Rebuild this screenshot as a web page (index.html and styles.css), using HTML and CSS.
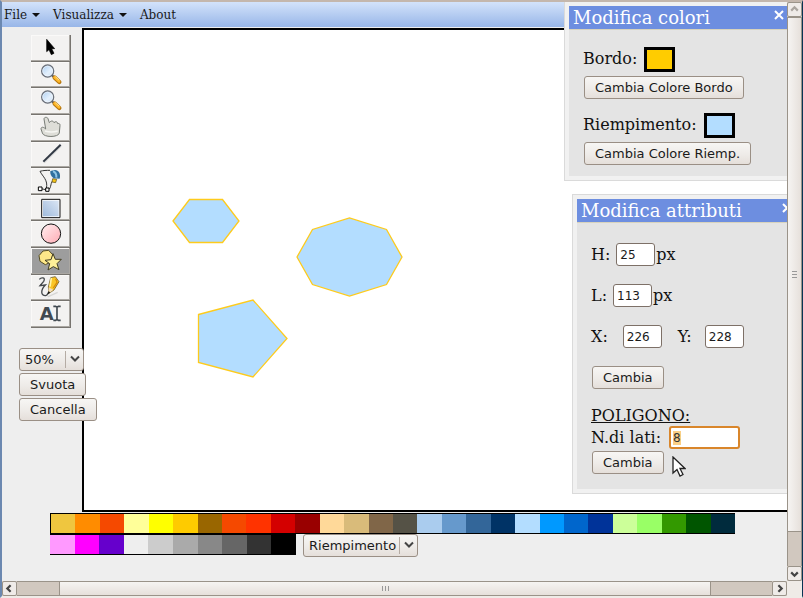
FILE: index.html
```html
<!DOCTYPE html>
<html lang="it">
<head>
<meta charset="utf-8">
<title>Editor SVG</title>
<link rel="stylesheet" href="styles.css">
</head>
<body>
<div class="window">
  <div class="page">
    <nav class="menubar">
      <button type="button">File <span class="caret"></span></button>
      <button type="button">Visualizza <span class="caret"></span></button>
      <button type="button">About</button>
    </nav>

    <div class="workspace">
      <div class="side">
        <div class="tools">
          <button type="button" aria-label="Seleziona"><svg viewBox="0 0 120 80"><path d="M47 13V50L54 44L61 59L69 55L62 41H71Z" fill="#000" stroke="#000" stroke-width="2"/></svg></button>
          <button type="button" aria-label="Zoom avanti"><svg viewBox="0 0 120 80"><defs><linearGradient id="lens" x1="0" y1="0" x2="1" y2="1"><stop offset="0" stop-color="#a9cdf2"/><stop offset=".6" stop-color="#e4f0fc"/><stop offset="1" stop-color="#c3dbf3"/></linearGradient><g id="magnifier"><path d="M63 40L74 50" stroke="#555" stroke-width="6"/><path d="M71 47L85 60" stroke="#b8780f" stroke-width="13" stroke-linecap="round"/><path d="M71 46L84 58" stroke="#ffb92c" stroke-width="8" stroke-linecap="round"/><path d="M73 44L84 54" stroke="#ffe08a" stroke-width="3"/><circle cx="50" cy="27" r="18" fill="url(#lens)" stroke="#686e78" stroke-width="4"/><circle cx="50" cy="27" r="15" fill="none" stroke="#f4f9ff" stroke-width="2"/></g></defs><use href="#magnifier"/></svg></button>
          <button type="button" aria-label="Zoom indietro"><svg viewBox="0 0 120 80"><use href="#magnifier"/></svg></button>
          <button type="button" aria-label="Sposta"><svg viewBox="0 0 120 80"><path d="M39 12C39 6 49 5 51 11L55 23C60 16 67 17 69 23C73 18 80 20 80 26C85 24 88 28 87 32L85 54C83 68 37 68 34 54L30 42C30 36 36 34 44 42Z" fill="#deded8" stroke="#777b75" stroke-width="3" stroke-linejoin="round"/><path d="M42 48Q60 54 80 48" fill="none" stroke="#f6f6f3" stroke-width="5"/></svg></button>
          <button type="button" aria-label="Linea"><svg viewBox="0 0 120 80"><path d="M39 62L90 12" stroke="#d5d5d5" stroke-width="5"/><path d="M37 59L89 8" stroke="#303843" stroke-width="6"/></svg></button>
          <button type="button" aria-label="Tracciato"><svg viewBox="0 0 120 80"><path d="M27 10C36 7 48 7 57 7M27 10C35 26 52 36 46 62M30 62L48 66C62 66 57 46 65 39" fill="none" stroke="#333" stroke-width="3"/><path d="M58 9L72 6C83 6 90 18 86 32L68 31C60 25 57 18 58 9Z" fill="#306f9f"/><path d="M66 10Q77 13 76 29" fill="none" stroke="#8fc5e6" stroke-width="6"/><path d="M65 32L77 34L74 44L63 42Z" fill="#f8c512" stroke="#4b4220" stroke-width="2"/><path d="M22 57H33V68H22ZM44 60H54V70H44Z" fill="#fff" stroke="#000" stroke-width="3"/></svg></button>
          <button type="button" aria-label="Rettangolo"><svg viewBox="0 0 120 80"><defs><linearGradient id="sky" x1="1" y1="0" x2="0" y2="1"><stop offset="0" stop-color="#dae5f4"/><stop offset="1" stop-color="#a0bbdc"/></linearGradient></defs><path d="M32 13H87V68H32Z" fill="#fff" stroke="#111" stroke-width="3"/><path d="M36 17H83V64H36Z" fill="url(#sky)"/></svg></button>
          <button type="button" aria-label="Ellisse"><svg viewBox="0 0 120 80"><defs><linearGradient id="rose" x1="0" y1="0" x2="1" y2="1"><stop offset="0" stop-color="#fff0f1"/><stop offset="1" stop-color="#ffabb4"/></linearGradient></defs><circle cx="60" cy="38" r="29" fill="url(#rose)" stroke="#111" stroke-width="3"/></svg></button>
          <button type="button" class="active" aria-label="Poligono"><svg viewBox="0 0 120 80"><path d="M36 9L53 7L65 20L62 41L43 50L27 40L24 23Z" fill="#fee889" stroke="#554d25" stroke-width="3"/><path d="M66 17L73 34L91 34L78 47L84 65L67 56L51 66L56 47L42 37L60 35Z" fill="#fff098" stroke="#3e3a22" stroke-width="3" stroke-linejoin="round"/></svg></button>
          <button type="button" aria-label="Matita"><svg viewBox="0 0 120 80"><path d="M25 13C31 6 45 7 38 19L27 32L43 30C28 45 29 63 44 62C52 60 50 49 59 46" fill="none" stroke="#44484b" stroke-width="4"/><path d="M59 8L73 5L84 20L69 45L54 55L52 36Z" fill="#f9c626" stroke="#4f3f13" stroke-width="2"/><path d="M61 9L57 35" stroke="#fff3a5" stroke-width="5"/><path d="M74 11L78 22L67 39" fill="none" stroke="#d98b08" stroke-width="4"/><path d="M53 37L67 44L52 57Z" fill="#f4ddb6"/><path d="M52 49L58 52L50 59Z" fill="#111"/><path d="M50 66L80 52" stroke="#d6d6d4" stroke-width="4"/></svg></button>
          <button type="button" aria-label="Testo"><svg viewBox="0 0 120 80"><text x="26" y="57" class="glyph">A</text><path d="M67 16H74L78 19L82 16H89M78 19V55M67 58H74L78 55L82 58H89" fill="none" stroke="#414950" stroke-width="5"/></svg></button>
        </div>
        <div class="actions">
          <span class="select"><select aria-label="Zoom"><option>50%</option><option>100%</option></select><svg viewBox="0 0 12 8"><path d="M2 1L6 5L10 1"/></svg></span>
          <button type="button" class="btn">Svuota</button>
          <button type="button" class="btn">Cancella</button>
        </div>
      </div>
      <div class="canvas">
        <svg width="100%" height="480" fill="#b3ddff" stroke="#fecb1c" stroke-width="1.300">
          <path d="M89 191L105.500 169.500H138.500L155 191L138.500 212.500H105.500Z"/>
          <path d="M213 227L228.500 199.500L265.500 188L302.500 199.500L318 227L302.500 254.500L265.500 266L228.500 254.500Z"/>
          <path d="M114.500 284.500L169 270L203 308.500L169 347L114.500 332.500Z"/>
        </svg>
      </div>
    </div>

    <div class="palette">
      <div class="swatches wide" id="row1"></div>
      <div class="palette-row">
        <div class="swatches short" id="row2"></div>
        <span class="select"><select aria-label="Applica a"><option>Riempimento</option><option>Bordo</option></select><svg viewBox="0 0 12 8"><path d="M2 1L6 5L10 1"/></svg></span>
      </div>
    </div>

    <section class="dialog colors">
      <header><h2>Modifica colori</h2><button type="button" aria-label="Chiudi"><svg viewBox="0 0 10 10"><path d="M1 1L9 9M9 1L1 9"/></svg></button></header>
      <div class="body">
        <p>Bordo: <span class="chip gold"></span></p>
        <button type="button" class="btn">Cambia Colore Bordo</button>
        <p class="second">Riempimento: <span class="chip blue"></span></p>
        <button type="button" class="btn">Cambia Colore Riemp.</button>
      </div>
    </section>

    <section class="dialog attributes">
      <header><h2>Modifica attributi</h2><button type="button" aria-label="Chiudi"><svg viewBox="0 0 10 10"><path d="M1 1L9 9M9 1L1 9"/></svg></button></header>
      <div class="body">
        <div class="field"><label for="h">H:</label><input id="h" value="25"><span>px</span></div>
        <div class="field"><label for="l">L:</label><input id="l" value="113"><span>px</span></div>
        <div class="field coords"><label for="x">X:</label><input id="x" value="226"><label for="y">Y:</label><input id="y" value="228"></div>
        <button type="button" class="btn">Cambia</button>
        <h3>POLIGONO:</h3>
        <div class="field sides"><label for="n">N.di lati:</label><input id="n" value="8"></div>
        <button type="button" class="btn">Cambia</button>
      </div>
    </section>

    <svg class="pointer" viewBox="0 0 14 21"><path d="M1 1V17L5 13.500L8 20L11 18.500L8 12.500H13Z" fill="#fff" stroke="#222" stroke-width="1.300"/></svg>
  </div>

  <div class="scroll vertical">
    <span class="end"><svg viewBox="0 0 10 10"><path d="M2 6L5 3L8 6" stroke="#aaa59f"/></svg></span>
    <span class="thumb"><i></i></span>
    <span class="trough"></span>
    <span class="end"><svg viewBox="0 0 10 10"><path d="M2 4L5 7L8 4"/></svg></span>
  </div>
  <div class="scroll horizontal">
    <span class="end"><svg viewBox="0 0 10 10"><path d="M6 2L3 5L6 8"/></svg></span>
    <span class="trough lead"></span>
    <span class="thumb"><i></i></span>
    <span class="trough"></span>
    <span class="end"><svg viewBox="0 0 10 10"><path d="M4 2L7 5L4 8"/></svg></span>
  </div>
</div>
<script src="script.js"></script>
</body>
</html>
```
FILE: styles.css
```css
* { box-sizing: border-box; }

body {
  margin: 0;
  font: 16px/20px "DejaVu Serif", serif;
  color: #111;
  background: #efebe7;
}

button, input, select { font: 13px/16px "DejaVu Sans", sans-serif; color: #1a1a1a; }
button { padding: 0; }
h2, h3, p { margin: 0; font-weight: 400; }

.window {
  height: 100vh;
  display: grid;
  grid-template: minmax(0, 1fr) 15px / minmax(0, 1fr) 15px;
  border-top: 2px solid #c4b7ad;
  border-left: 2px solid #6b88b0;
  border-right: 1px solid #083454;
  border-bottom: 2px solid #efebe7;
}

.page { position: relative; overflow: hidden; background: #eee; }

.menubar {
  height: 25px;
  display: flex;
  gap: 13px;
  padding: 0 2px;
  background: linear-gradient(#d3e3fb, #98b6e8);
}
.menubar button {
  display: flex;
  align-items: center;
  gap: 5px;
  border: 0;
  background: none;
  font: 12px/22px "DejaVu Serif", serif;
}
.caret { border: 4px solid transparent; border-top-color: #111; border-bottom: 0; }

.workspace { display: flex; margin-top: 1px; }
.side { width: 80px; flex: none; position: relative; z-index: 1; }
.canvas { flex: 1; border: 2px solid #000; border-right: 0; background: #fff; }
.canvas svg { display: block; }

.tools {
  display: grid;
  grid-auto-rows: 1fr;
  width: 40px;
  height: 293px;
  margin: 7px 0 0 29px;
}
.tools button {
  display: flex;
  min-height: 0;
  border: 0;
  background: #f3f2f1;
  box-shadow: inset -1px -1px #77746f, inset -2px -2px #aaa7a2, inset 1px 1px #faf9f8;
}
.tools svg { width: 100%; height: 100%; fill: none; }
.tools .active { background: #9d9d9d; }
.glyph { font: bold 54px "DejaVu Sans", sans-serif; fill: #414950; }

.actions {
  display: flex;
  flex-direction: column;
  align-items: flex-start;
  gap: 2px;
  margin: 20px 0 0 17px;
}

.btn, .select select {
  height: 23px;
  border: 1px solid #9a8f85;
  border-radius: 3px;
  background: linear-gradient(#f7f6f4, #eeebe8 55%, #e5dfda);
  white-space: nowrap;
}
.btn { padding: 0 10px; }
.select { position: relative; display: inline-flex; }
.select select { appearance: none; padding: 0 20px 0 5px; }
.select svg {
  position: absolute;
  right: 0;
  top: 3px;
  width: 19px;
  height: 17px;
  padding: 4px 3px;
  border-left: 1px solid #b5aca4;
  pointer-events: none;
}
.select path { fill: none; stroke: #444; stroke-width: 2; }

.palette { margin: 1px 0 0 48px; }
.swatches { display: grid; height: 21px; border: solid #000; border-width: 1px 0; }
.wide { width: 685px; grid-template-columns: repeat(28, 1fr); border-left-width: 1px; }
.short { width: 246px; grid-template-columns: repeat(10, 1fr); }
.palette-row { display: flex; gap: 7px; }

.dialog {
  position: absolute;
  width: 228px;
  padding: 4px;
  border: 1px solid #dadada;
  background: #f1f1f1;
}
.colors { top: -1px; right: -5px; }
.attributes { top: 192px; right: -13px; }
.dialog header {
  display: flex;
  justify-content: space-between;
  height: 24px;
  padding: 0 3px 0 4px;
  border-bottom: 1px solid #d8d3bd;
  background: #6d8ee0;
}
.dialog h2 { font-size: 18px; line-height: 24px; color: #fff; white-space: nowrap; }
.dialog header button { width: 10px; height: 10px; margin-top: 4px; border: 0; background: none; }
.dialog header svg { display: block; stroke: #fff; stroke-width: 2; }
.dialog .body { padding: 16px 14px; background: #e4e4e4; }

.colors .body { height: 146px; }
.colors p { display: flex; align-items: center; gap: 7px; height: 26px; }
.colors .btn { display: block; margin: 4px 0 0 1px; }
.colors .second { margin-top: 13px; }
.chip { width: 31px; height: 25px; border: 3px solid #000; }
.gold { background: #fc0; }
.blue { background: #b3ddff; }

.attributes .body { height: 266px; padding-top: 20px; }
.attributes .btn { display: block; margin-left: 1px; }
.field { display: flex; align-items: center; height: 23px; margin-bottom: 18px; }
.field input {
  width: 39px;
  height: 23px;
  margin: 0 1px 0 6px;
  padding: 0 3px;
  border: 1px solid #7d7067;
  border-radius: 3px;
  background: #fff;
  font-size: 12px;
}
.coords input { margin: 0 16px 0 15px; }
.coords input:last-child { margin-left: 13px; }
.attributes h3 { margin-top: 17px; font-size: 16px; line-height: 20px; text-decoration: underline; }
.sides { margin-bottom: 2px; }
.sides input { width: 71px; margin-left: 8px; padding: 0 2px; border: 2px solid #d9862b; }
.sides input:focus { outline: none; }
.sides input::selection { background: #fbcf85; color: #333; }

.pointer { position: absolute; left: 670px; top: 454px; width: 14px; height: 21px; }

.scroll { display: flex; background: #d1c8bf; }
.scroll span { border: 1px solid #9a9389; }
.scroll .end, .scroll .thumb { display: flex; align-items: center; justify-content: center; background: #efebe8; }
.scroll .end { flex: 0 0 15px; border-radius: 2px; }
.scroll svg { width: 11px; height: 11px; fill: none; stroke: #444; stroke-width: 2; }
.vertical { flex-direction: column; }
.vertical .thumb { flex: 517; background: linear-gradient(90deg, #f6f4f2, #e6e0db); }
.vertical .trough { flex: 34; border-width: 0 1px; }
.vertical i { width: 5px; height: 7px; background: repeating-linear-gradient(#999 0 1px, transparent 1px 3px); }
.horizontal .thumb { flex: 653; background: linear-gradient(#f6f4f2, #e6e0db); }
.horizontal .trough { flex: 61; border-width: 1px 0; }
.horizontal .lead { flex: 42; }
.horizontal i { width: 7px; height: 5px; background: repeating-linear-gradient(90deg, #999 0 1px, transparent 1px 3px); }
```
FILE: script.js
```js
const rows = {
  row1: ["#efc63f", "#ff8c00", "#f54900", "#ffff99", "#ffff00", "#fecb00", "#996600", "#f54900", "#ff3300", "#d40000", "#990000", "#ffd999", "#d9bb7a", "#806648", "#555246", "#aaccee", "#6699cc", "#336699", "#003366", "#b3ddff", "#0099ff", "#0066cc", "#003399", "#ccff99", "#99ff66", "#339900", "#005500", "#002b3d"],
  row2: ["#ff99ff", "#ff00ff", "#6600cc", "#eeeeee", "#cccccc", "#aaaaaa", "#888888", "#666666", "#333333", "#000000"]
};

for (const [id, colors] of Object.entries(rows)) {
  const row = document.getElementById(id);
  for (const color of colors) {
    const swatch = document.createElement("span");
    swatch.style.background = color;
    row.append(swatch);
  }
}

document.getElementById("n").focus();
document.getElementById("n").select();
```
